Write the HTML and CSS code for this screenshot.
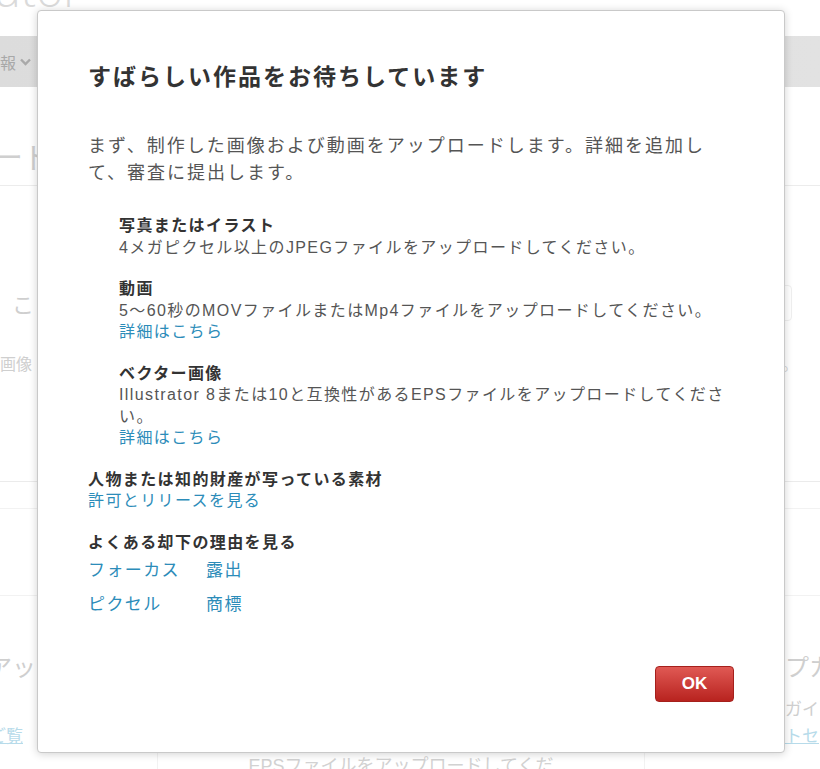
FILE: index.html
```html
<!DOCTYPE html>
<html lang="ja">
<head>
    <meta charset="UTF-8">
    <meta name="viewport" content="width=device-width, initial-scale=1.0">
    <title>コントリビューター</title>
    <link rel="stylesheet" href="styles.css">
</head>
<body>
    <!-- faded page behind the dialog -->
    <div class="page">
        <div class="brand">ributor</div>
        <div class="navbar">
            <span class="nav-item">情報
                <svg class="chev" width="11" height="8" viewBox="0 0 11 8"><path d="M1 1.5l4.5 4.5 4.5-4.5" fill="none" stroke="#a9a9a9" stroke-width="2.4"/></svg>
            </span>
        </div>
        <div class="page-title">アップロード</div>
        <div class="upload-row">
            <span class="hint-big">ここに</span>
            <span class="input-box"></span>
        </div>
        <div class="hint-row">
            <span>画像</span>
            <span>。</span>
        </div>
        <div class="rule-a"></div>
        <div class="rule-b"></div>
        <div class="columns">
            <div class="col col-left">
                <div class="col-big">アップ</div>
                <div class="col-text">　</div>
                <a class="col-link" href="#">詳細をご覧</a>
            </div>
            <div class="col col-mid">
                <div class="col-foot">EPSファイルをアップロードしてくだ</div>
            </div>
            <div class="col col-right">
                <div class="col-big">プカ</div>
                <div class="col-text">ガイ</div>
                <a class="col-link" href="#">トセ</a>
            </div>
        </div>
    </div>

    <div class="modal">
        <h2 class="modal-title">すばらしい作品をお待ちしています</h2>
        <p class="intro">まず、制作した画像および動画をアップロードします。詳細を追加して、審査に提出します。</p>

        <div class="types">
            <div class="type">
                <h4>写真またはイラスト</h4>
                <p>4メガピクセル以上のJPEGファイルをアップロードしてください。</p>
            </div>
            <div class="type">
                <h4>動画</h4>
                <p>5〜60秒のMOVファイルまたはMp4ファイルをアップロードしてください。</p>
                <a href="#">詳細はこちら</a>
            </div>
            <div class="type">
                <h4>ベクター画像</h4>
                <p>Illustrator 8または10と互換性があるEPSファイルをアップロードしてください。</p>
                <a href="#">詳細はこちら</a>
            </div>
        </div>

        <div class="section">
            <h4>人物または知的財産が写っている素材</h4>
            <a href="#">許可とリリースを見る</a>
        </div>

        <div class="section">
            <h4>よくある却下の理由を見る</h4>
            <div class="reasons">
                <a href="#">フォーカス</a>
                <a href="#">露出</a>
                <a href="#">ピクセル</a>
                <a href="#">商標</a>
            </div>
        </div>

        <div class="modal-footer">
            <button class="btn-ok">OK</button>
        </div>
    </div>
</body>
</html>
```

FILE: styles.css
```css
body {
    margin: 0;
    font-family: "Liberation Sans", "Noto Sans CJK JP", sans-serif;
    background-color: #fff;
    overflow: hidden;
    height: 769px;
}
a {
    text-decoration: none;
}

/* background page, washed out */
.page {
    color: #cfcfcf;
    white-space: nowrap;
}
.brand {
    font-family: "Open Sans", sans-serif;
    font-weight: 300;
    font-size: 46px;
    line-height: 46px;
    margin-top: -34px;
    margin-left: -62px;
    color: #dadada;
}
.navbar {
    margin-top: 24px;
    height: 51px;
    background: linear-gradient(to right, #dcdcdc, #e2e2e2);
    display: flex;
    align-items: center;
}
.nav-item {
    margin-left: -16px;
    font-size: 16px;
    color: #a8a8a8;
    display: flex;
    align-items: center;
    gap: 4px;
}
.page-title {
    font-size: 30px;
    line-height: 40px;
    margin: 51px 0 0 -127px;
    padding-bottom: 7px;
    border-bottom: 1px solid #ececec;
}
.upload-row {
    display: flex;
    justify-content: space-between;
    align-items: center;
    margin-top: 99px;
}
.hint-big {
    font-size: 22px;
    margin-left: 12px;
}
.input-box {
    width: 40px;
    height: 34px;
    margin-right: 28px;
    border: 1px solid #efefef;
    border-radius: 4px;
}
.hint-row {
    display: flex;
    justify-content: space-between;
    font-size: 16px;
    margin-top: 30px;
}
.hint-row span:last-child {
    margin-right: 22px;
}
.rule-a {
    margin-top: 106px;
    border-top: 1px solid #ebebeb;
}
.rule-b {
    margin-top: 26px;
    border-top: 1px solid #f2f2f2;
}
.columns {
    display: grid;
    grid-template-columns: 157px 488px 1fr;
    margin-top: 86px;
    border-top: 1px solid #f2f2f2;
}
.col-mid {
    border-left: 1px solid #f2f2f2;
    border-right: 1px solid #f2f2f2;
    min-height: 200px;
    text-align: center;
}
.col-big {
    font-size: 24px;
    margin-top: 52px;
}
.col-left .col-big {
    margin-left: -12px;
}
.col-text {
    font-size: 17px;
    margin-top: 12px;
}
.col-link {
    display: inline-block;
    font-size: 17px;
    margin-top: 2px;
    color: #b7dbea;
    text-decoration: underline;
}
.col-left .col-link {
    margin-left: -62px;
}
.col-right .col-big,
.col-right .col-text,
.col-right .col-link {
    margin-left: 140px;
}
.col-foot {
    margin-top: 155px;
    font-size: 18px;
    color: #d2d2d2;
}

/* dialog */
.modal {
    position: absolute;
    left: 37px;
    top: 10px;
    width: 646px;
    height: 641px;
    padding: 50px;
    background-color: #fff;
    border: 1px solid #c9c9c9;
    border-radius: 4px;
    box-shadow: 0 1px 8px rgba(0, 0, 0, 0.18);
    display: flex;
    flex-direction: column;
    color: #555;
    font-size: 16px;
    letter-spacing: 1.4px;
    line-height: 21.5px;
}
.modal h4 {
    margin: 0;
    font-size: 16px;
    color: #333;
}
.modal p {
    margin: 0;
}
.modal a {
    color: #2c8cb9;
}
.modal-title {
    margin: 1px 0 0;
    font-size: 23px;
    line-height: 30px;
    letter-spacing: 2px;
    color: #333;
}
.intro {
    margin-top: 41px !important;
    font-size: 18px;
    letter-spacing: 2px;
    line-height: 26.5px;
}
.types {
    margin: 29px 0 0 31px;
    display: flex;
    flex-direction: column;
    gap: 20px;
}
.type a {
    display: block;
}
.section {
    margin-top: 20px;
}
.section a {
    display: block;
}
.reasons {
    display: grid;
    grid-template-columns: 118px auto;
    justify-content: start;
    row-gap: 12.5px;
    margin-top: 7px;
    font-size: 17px;
}
.modal-footer {
    margin-top: auto;
    display: flex;
    justify-content: flex-end;
}
.btn-ok {
    width: 79px;
    height: 36px;
    margin-bottom: 0;
    border: 1px solid #a5201c;
    border-radius: 4px;
    background: linear-gradient(to bottom, #e05954, #b8231f);
    color: #fff;
    font-family: "Liberation Sans", sans-serif;
    font-size: 17px;
    font-weight: bold;
    cursor: pointer;
}
```
